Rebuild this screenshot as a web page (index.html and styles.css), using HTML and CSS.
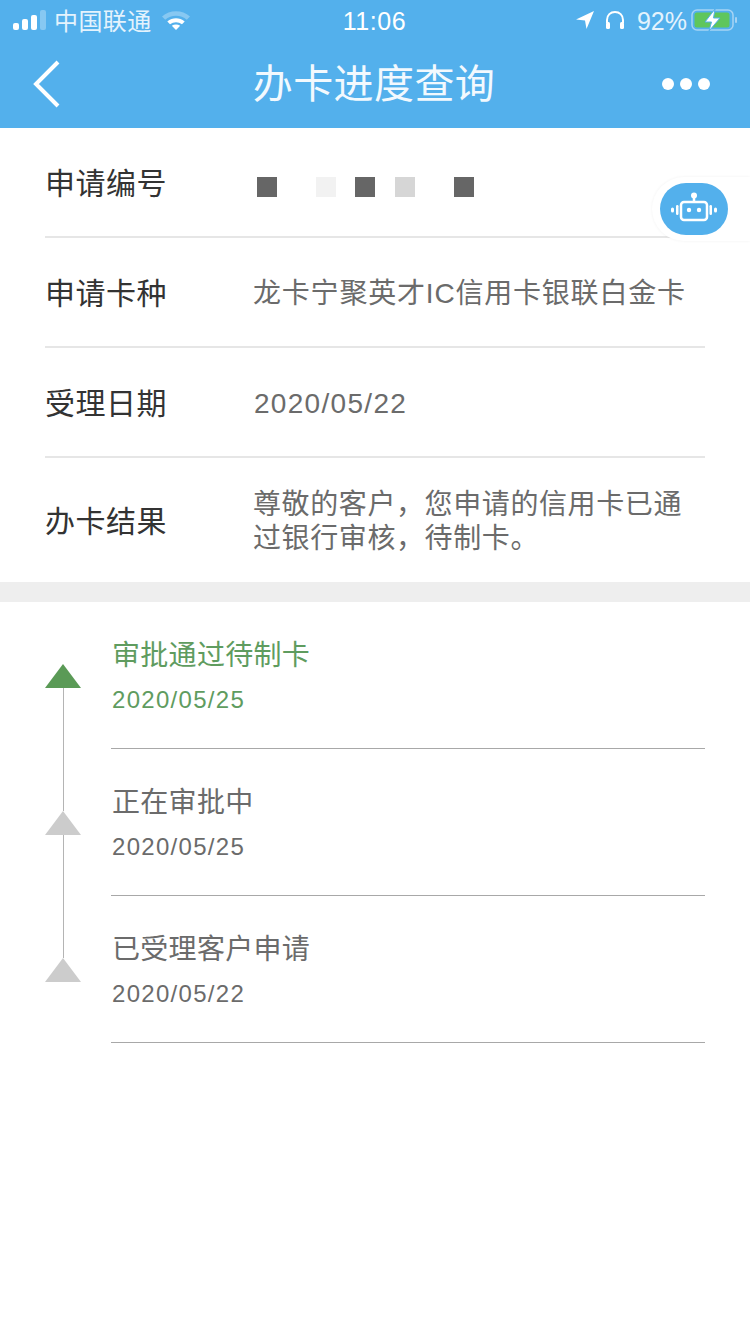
FILE: index.html
```html
<!doctype html>
<html>

<head>
    <title>办卡进度查询</title>
    <meta charset="utf-8">
    <link rel="stylesheet" href="styles.css">
</head>

<body>
    <header class="top">
        <div class="status">
            <div class="status-left">
                <svg class="signal" width="34" height="22" viewBox="0 0 34 22">
                    <rect x="1" y="14" width="6" height="7" rx="2" fill="#fff"/>
                    <rect x="10" y="10" width="6" height="11" rx="2" fill="#fff"/>
                    <rect x="19" y="6" width="6" height="15" rx="2" fill="#fff"/>
                    <rect x="28" y="1" width="6" height="20" rx="2" fill="#fff" opacity=".3"/>
                </svg>
                <span class="carrier">中国联通</span>
                <svg class="wifi" width="30" height="22" viewBox="0 0 30 22">
                    <path d="M1 7.5C8.500 .5 21.500 .5 29 7.500L25.800 10.800C20 5.500 10 5.500 4.200 10.800Z" fill="#fff" opacity=".3"/>
                    <path d="M6.300 12.500C11.500 8.200 18.500 8.200 23.700 12.500L21 15.300C17.300 12.400 12.700 12.400 9 15.300Z" fill="#fff"/>
                    <path d="M10.800 16.800C13.400 15 16.600 15 19.200 16.800L15 21Z" fill="#fff"/>
                </svg>
            </div>
            <div class="time">11:06</div>
            <div class="status-right">
                <svg width="20" height="20" viewBox="0 0 20 20">
                    <path d="M19 1L1 9.500L10 10.500L11.500 19Z" fill="#fff"/>
                </svg>
                <svg class="phones" width="22" height="20" viewBox="0 0 22 20">
                    <path d="M3 13V10C3 5 6.500 2 11 2C15.500 2 19 5 19 10V13" fill="none" stroke="#fff" stroke-width="2"/>
                    <rect x="2" y="12" width="4" height="7" rx="1.500" fill="#fff"/>
                    <rect x="16" y="12" width="4" height="7" rx="1.500" fill="#fff"/>
                </svg>
                <span class="percent">92%</span>
                <svg class="battery" width="46" height="24" viewBox="0 0 46 24">
                    <rect x="1" y="2" width="41" height="20" rx="5" fill="none" stroke="#a6d3f4" stroke-width="1.500"/>
                    <rect x="3.500" y="4.500" width="35" height="15" rx="2.500" fill="#5fc65c"/>
                    <rect x="44" y="9" width="2" height="6" rx="1" fill="#a6d3f4"/>
                    <path d="M24 1L14 14H20.500L18 23L29 10H22.500Z" fill="#fff" stroke="#53b0ec" stroke-width="1"/>
                </svg>
            </div>
        </div>
        <div class="nav">
            <svg class="back" width="30" height="50" viewBox="0 0 30 50">
                <path d="M26 3L4 25L26 47" fill="none" stroke="#fff" stroke-width="4"/>
            </svg>
            <h1 class="title">办卡进度查询</h1>
            <div class="more"><i></i><i></i><i></i></div>
        </div>
    </header>

    <section class="info">
        <div class="row">
            <div class="label">申请编号</div>
            <div class="mask">
                <i class="dark"></i><i></i><i></i><i class="pale"></i><i></i><i class="dark"></i><i></i><i class="mid"></i><i></i><i></i><i class="dark"></i>
            </div>
        </div>
        <div class="row">
            <div class="label">申请卡种</div>
            <div class="value value-card">龙卡宁聚英才IC信用卡银联白金卡</div>
        </div>
        <div class="row">
            <div class="label">受理日期</div>
            <div class="value value-date">2020/05/22</div>
        </div>
        <div class="row row-last">
            <div class="label">办卡结果</div>
            <div class="value">尊敬的客户，您申请的信用卡已通过银行审核，待制卡。</div>
        </div>
    </section>

    <section class="steps">
        <div class="step done">
            <div class="step-text">
                <div class="step-name">审批通过待制卡</div>
                <div class="step-date">2020/05/25</div>
            </div>
        </div>
        <div class="step">
            <div class="step-text">
                <div class="step-name">正在审批中</div>
                <div class="step-date">2020/05/25</div>
            </div>
        </div>
        <div class="step step-end">
            <div class="step-text">
                <div class="step-name">已受理客户申请</div>
                <div class="step-date">2020/05/22</div>
            </div>
        </div>
    </section>

    <div class="bot">
        <div class="bot-btn">
            <svg width="48" height="34" viewBox="0 0 48 34">
                <g fill="none" stroke="#fff" stroke-width="2.500">
                    <rect x="11" y="10" width="26" height="18" rx="3"/>
                    <path d="M24 4V10"/>
                </g>
                <circle cx="24" cy="3.500" r="3" fill="#fff"/>
                <circle cx="19" cy="18" r="2.200" fill="#fff"/>
                <circle cx="29" cy="18" r="2.200" fill="#fff"/>
                <rect x="6" y="13" width="2.500" height="10" rx="1.200" fill="#fff"/>
                <rect x="39.500" y="13" width="2.500" height="10" rx="1.200" fill="#fff"/>
                <rect x="1" y="15.500" width="3" height="5" rx="1.500" fill="#fff"/>
                <rect x="44" y="15.500" width="3" height="5" rx="1.500" fill="#fff"/>
            </svg>
        </div>
    </div>
</body>

</html>
```

FILE: styles.css
```css
* {
    box-sizing: border-box;
}

body {
    margin: 0;
    height: 1334px;
    overflow: hidden;
    position: relative;
    background-color: #fff;
    font-family: "Liberation Sans", "Noto Sans CJK SC", sans-serif;
}

.top {
    height: 128px;
    background-color: #53b0ec;
    color: #fff;
}

.status {
    height: 40px;
    padding: 0 13px 0 12px;
    display: grid;
    grid-template-columns: 1fr auto 1fr;
    align-items: center;
}

.status-left, .status-right {
    display: flex;
    align-items: center;
}

.status-right {
    justify-content: flex-end;
}

.carrier {
    margin: 0 0 2px 8px;
    font-size: 24px;
    letter-spacing: 0.4px;
    color: #e4f3fd;
}

.wifi {
    margin-left: 9px;
}

.time {
    margin-top: 2px;
    font-size: 25px;
    letter-spacing: 0.6px;
}

.phones {
    margin-left: 9px;
}

.percent {
    margin: 2px 0 0 11px;
    font-size: 25px;
    color: #e4f3fd;
}

.battery {
    margin-left: 4px;
}

.nav {
    height: 88px;
    padding: 0 40px 0 38px;
    display: grid;
    grid-template-columns: 1fr auto 1fr;
    align-items: center;
}

.back {
    margin-left: -6px;
}

.title {
    margin: 0 0 6px;
    font-size: 40px;
    font-weight: normal;
    letter-spacing: 0.4px;
    color: #f2f9fe;
}

.more {
    display: flex;
    justify-content: flex-end;
    gap: 6px;
}

.more i {
    width: 12px;
    height: 12px;
    border-radius: 50%;
    background-color: #fff;
}

.info {
    border-bottom: 20px solid #eeeeee;
}

.row {
    height: 110px;
    margin: 0 45px;
    border-bottom: 2px solid #e6e6e6;
    display: flex;
    align-items: center;
}

.row-last {
    height: 124px;
    border-bottom: 0;
}

.label {
    width: 208px;
    flex: none;
    margin-bottom: 2px;
    font-size: 30px;
    letter-spacing: 0.5px;
    color: #333;
}

.value {
    margin-top: 4px;
    font-size: 28px;
    line-height: 34px;
    letter-spacing: 0.6px;
    color: #6b6b6b;
}

.value-card {
    letter-spacing: 0.8px;
}

.value-date {
    margin-left: 1px;
    letter-spacing: 1.3px;
}

.mask {
    margin: 10px 0 0 4px;
    display: flex;
}

.mask i {
    width: 19.7px;
    height: 20px;
}

.mask .dark {
    background-color: #666;
}

.mask .mid {
    background-color: #d6d6d6;
}

.mask .pale {
    background-color: #f2f2f2;
}

.steps {
    padding: 0 45px 0 111px;
}

.step {
    height: 147px;
    position: relative;
    border-bottom: 1px solid #a8a8a8;
    color: #6b6b6b;
}

/* triangle marker on the time line */
.step::before {
    content: "";
    position: absolute;
    left: -66px;
    top: 62px;
    border-left: 18px solid transparent;
    border-right: 18px solid transparent;
    border-bottom: 24px solid #cccccc;
}

.step::after {
    content: "";
    position: absolute;
    left: -48px;
    top: 86px;
    width: 1px;
    height: 123px;
    background-color: #b4b4b4;
}

.step-end::after {
    display: none;
}

.done {
    color: #5f9c5f;
}

.done::before {
    border-bottom-color: #5a9a56;
}

.step-text {
    padding: 34px 0 0 1px;
}

.step-name {
    font-size: 28px;
    line-height: 40px;
    letter-spacing: 0.3px;
}

.step-date {
    margin-top: 9px;
    font-size: 24px;
    line-height: 30px;
    letter-spacing: 1.3px;
}

/* floating robot button */
.bot {
    position: absolute;
    left: 652px;
    top: 177px;
    width: 98px;
    height: 64px;
    padding: 6px 0 0 8px;
    background-color: #fff;
    border-radius: 32px 0 0 32px;
    box-shadow: 0 0 3px rgba(0, 0, 0, 0.06);
}

.bot-btn {
    width: 68px;
    height: 52px;
    border-radius: 26px;
    background-color: #53b0ec;
    display: flex;
    align-items: center;
    justify-content: center;
}
```
